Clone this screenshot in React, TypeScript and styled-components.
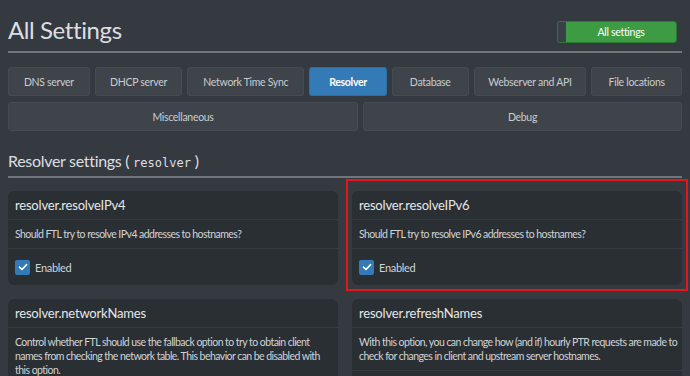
import React from 'react'
import styled, { createGlobalStyle } from 'styled-components'

const GlobalStyle = createGlobalStyle`
  html, body {
    margin: 0;
    padding: 0;
    background: #353a40;
  }
  body {
    font-family: 'Lato', 'Open Sans', sans-serif;
    color: #d5d8db;
    overflow: hidden;
  }
`

const Page = styled.div`
  position: relative;
  padding: 0 8px;
  width: 690px;
  height: 376px;
  box-sizing: border-box;
  overflow: hidden;
`

const TitleBar = styled.div`
  display: flex;
  justify-content: space-between;
  align-items: flex-end;
  height: 53px;
  padding-bottom: 8px;
  box-sizing: border-box;
  border-bottom: 2px solid #71767b;
`

const Title = styled.h1`
  margin: 0;
  font-size: 24px;
  font-weight: 400;
  letter-spacing: -0.4px;
  line-height: 1;
  color: #dcdfe1;
  padding-bottom: 1px;
`

const Toggle = styled.div`
  display: flex;
  width: 120px;
  height: 22px;
  border: 1px solid #2b7a31;
  border-radius: 3px;
  overflow: hidden;
  box-sizing: border-box;
  margin-right: 5px;
`

const ToggleHandle = styled.span`
  width: 8px;
  background: #3a4047;
`

const ToggleLabel = styled.span`
  flex: 1;
  display: flex;
  align-items: center;
  justify-content: center;
  background: #3d9b43;
  color: #fff;
  font-size: 10.5px;
  letter-spacing: -0.3px;
`

const TabRow = styled.div`
  display: flex;
  gap: 5px;
  margin-top: 14px;
  & + & {
    margin-top: 6px;
  }
`

const Tab = styled.div<{ $basis: number; $active?: boolean }>`
  flex: 1 1 ${p => p.$basis}px;
  height: 29px;
  display: flex;
  align-items: center;
  justify-content: center;
  box-sizing: border-box;
  border-radius: 3px;
  font-size: 10.5px;
  letter-spacing: -0.3px;
  background: ${p => (p.$active ? '#337ab7' : '#3e444a')};
  border: 1px solid ${p => (p.$active ? '#2e6ea6' : '#454b52')};
  color: ${p => (p.$active ? '#ffffff' : '#c9ccd0')};
  font-weight: ${p => (p.$active ? 700 : 400)};
`

const SectionTitle = styled.h2`
  margin: 22px 0 0;
  padding-bottom: 7px;
  font-size: 16px;
  font-weight: 400;
  letter-spacing: -0.3px;
  line-height: 1;
  color: #dcdfe1;
  border-bottom: 2px solid #71767b;
`

const Mono = styled.code`
  font-family: 'DejaVu Sans Mono', 'Liberation Mono', monospace;
  font-size: 12px;
  letter-spacing: 0;
`

const CardGrid = styled.div`
  display: grid;
  grid-template-columns: 1fr 1fr;
  column-gap: 14px;
  row-gap: 14px;
  margin-top: 13px;
`

const Card = styled.div`
  background: #2a2f34;
  border-radius: 6px;
  overflow: hidden;
`

const CardHeader = styled.div`
  height: 28px;
  display: flex;
  align-items: center;
  padding: 0 7px;
  font-size: 13px;
  letter-spacing: -0.2px;
  color: #e6e7e8;
  border-bottom: 1px solid #363b41;
`

const CardBody = styled.div`
  padding: 7px 4px 7px 7px;
  font-size: 10.5px;
  letter-spacing: -0.55px;
  line-height: 14px;
  color: #d0d3d6;
  border-bottom: 1px solid #363b41;
`

const CardFooter = styled.div`
  height: 36px;
  display: flex;
  align-items: center;
  gap: 5px;
  padding: 0 7px;
  font-size: 11px;
  letter-spacing: -0.3px;
  color: #d0d3d6;
`

const Checkbox = styled.span`
  width: 15px;
  height: 15px;
  background: #337ab7;
  border-radius: 2px;
  display: flex;
  align-items: center;
  justify-content: center;
`

const Highlight = styled.div`
  position: absolute;
  left: 346px;
  top: 179px;
  width: 342px;
  height: 112px;
  border: 2px solid #e3161b;
  box-sizing: border-box;
  pointer-events: none;
`

const tabs1 = [
  { label: 'DNS server', basis: 60 },
  { label: 'DHCP server', basis: 66 },
  { label: 'Network Time Sync', basis: 95 },
  { label: 'Resolver', basis: 56, active: true },
  { label: 'Database', basis: 55 },
  { label: 'Webserver and API', basis: 91 },
  { label: 'File locations', basis: 69 },
]

function Check() {
  return (
    <Checkbox>
      <svg width="10" height="10" viewBox="0 0 10 10">
        <path d="M1.5 5.2 L4 7.5 L8.6 2.6" fill="none" stroke="#fff" strokeWidth="1.6" strokeLinecap="round" strokeLinejoin="round" />
      </svg>
    </Checkbox>
  )
}

export default function App() {
  return (
    <Page>
      <GlobalStyle />
      <TitleBar>
        <Title>All Settings</Title>
        <Toggle>
          <ToggleHandle />
          <ToggleLabel>All settings</ToggleLabel>
        </Toggle>
      </TitleBar>
      <TabRow>
        {tabs1.map(t => (
          <Tab key={t.label} $basis={t.basis} $active={t.active}>
            {t.label}
          </Tab>
        ))}
      </TabRow>
      <TabRow>
        <Tab $basis={100}>Miscellaneous</Tab>
        <Tab $basis={69}>Debug</Tab>
      </TabRow>
      <SectionTitle>
        Resolver settings ( <Mono>resolver</Mono> )
      </SectionTitle>
      <CardGrid>
        <Card>
          <CardHeader>resolver.resolveIPv4</CardHeader>
          <CardBody>Should FTL try to resolve IPv4 addresses to hostnames?</CardBody>
          <CardFooter>
            <Check />
            Enabled
          </CardFooter>
        </Card>
        <Card>
          <CardHeader>resolver.resolveIPv6</CardHeader>
          <CardBody>Should FTL try to resolve IPv6 addresses to hostnames?</CardBody>
          <CardFooter>
            <Check />
            Enabled
          </CardFooter>
        </Card>
        <Card>
          <CardHeader>resolver.networkNames</CardHeader>
          <CardBody>
            Control whether FTL should use the fallback option to try to obtain client names from checking the
            network table. This behavior can be disabled with this option.
          </CardBody>
        </Card>
        <Card>
          <CardHeader>resolver.refreshNames</CardHeader>
          <CardBody>
            With this option, you can change how (and if) hourly PTR requests are made to check for changes in
            client and upstream server hostnames.
          </CardBody>
          <CardFooter />
        </Card>
      </CardGrid>
      <Highlight />
    </Page>
  )
}
